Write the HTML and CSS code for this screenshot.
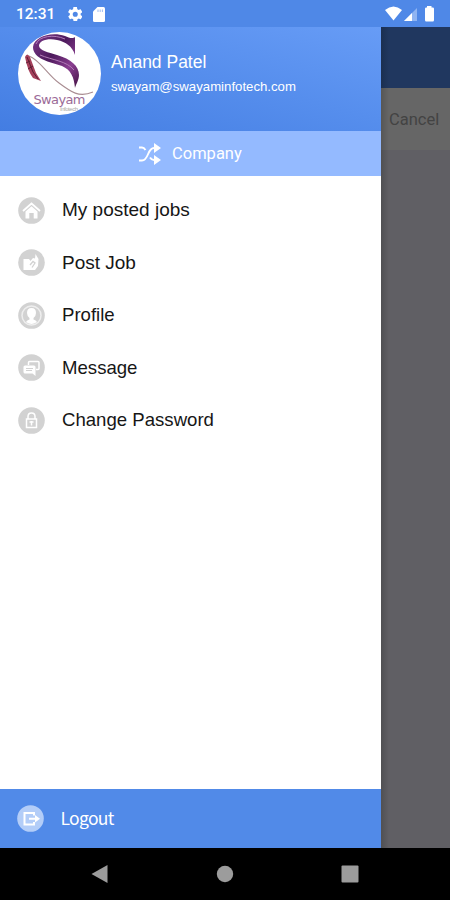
FILE: index.html
```html
<!DOCTYPE html>
<html>
<head>
<meta charset="UTF-8">
<title>Menu</title>
<link rel="stylesheet" href="styles.css">
</head>
<body>
<div class="status">
  <span class="time">12:31</span>
  <svg class="gear" width="14.500" height="14.500" viewBox="2 2 20 20"><path fill="#fff" d="M19.4 13c0-.3.1-.6.1-1s0-.7-.1-1l2.1-1.600c.2-.2.2-.4.1-.6l-2-3.500c-.1-.2-.4-.3-.6-.2l-2.500 1c-.5-.4-1.100-.7-1.700-1l-.4-2.600c0-.3-.2-.5-.5-.5h-4c-.3 0-.5.2-.5.4l-.4 2.700c-.6.2-1.100.6-1.700 1l-2.500-1c-.2-.1-.5 0-.6.2l-2 3.500c-.1.2-.1.500.1.600L4.600 11c0 .3-.1.700-.1 1s0 .7.1 1l-2.100 1.600c-.2.200-.2.400-.1.600l2 3.500c.1.200.4.300.6.200l2.500-1c.5.4 1.100.7 1.700 1l.4 2.600c0 .3.200.5.500.5h4c.3 0 .5-.2.500-.5l.4-2.600c.6-.3 1.200-.6 1.700-1l2.500 1c.2.100.5 0 .6-.2l2-3.500c.1-.2.1-.5-.1-.6zM12 15.500a3.500 3.500 0 1 1 0-7 3.500 3.500 0 0 1 0 7z"/></svg>
  <svg class="card" width="12" height="15" viewBox="0 0 12 15"><path fill="#fff" d="M4.500 0H10.500Q12 0 12 1.500V13.500Q12 15 10.500 15H1.500Q0 15 0 13.500V4.500z"/><path stroke="#9dbcf2" stroke-width="1" d="M5 2.500V5M7.200 2.500V5M9.400 2.500V5"/></svg>
  <svg class="signals" width="52" height="16" viewBox="0 0 52 16">
    <path fill="#fff" d="M0 4Q8.500-3 17 4L8.500 14.500z"/>
    <path fill="#8fb4f2" d="M19 15L32 2V15z"/>
    <path fill="#fff" d="M19 15L27 7V15z"/>
    <path fill="#fff" d="M42 1.500V0H46.500V1.500H47.800Q49 1.500 49 2.700V14Q49 15.500 47.800 15.500H41.200Q40 15.500 40 14V2.700Q40 1.500 41.200 1.500z"/>
  </svg>
</div>

<div class="main">
  <div class="drawer">
    <div class="header">
      <svg class="avatar" width="83" height="83" viewBox="0 0 83 83">
        <defs>
          <clipPath id="round"><circle cx="41.500" cy="41.500" r="41.500"/></clipPath>
          <linearGradient id="plum" x1="0" y1="0" x2="1" y2="1">
            <stop offset="0" stop-color="#7d3a8c"/><stop offset=".4" stop-color="#4d1a5c"/>
            <stop offset=".7" stop-color="#8a3f91"/><stop offset="1" stop-color="#401041"/>
          </linearGradient>
        </defs>
        <circle cx="41.500" cy="41.500" r="41.500" fill="#fff"/>
        <g clip-path="url(#round)">
          <path fill="none" stroke="#a98d92" stroke-width="1.100" d="M11 24C22 28 29 42 41 51S61 66 75 60"/>
          <path fill="#a5405b" d="M7 25Q9 20 12 25L18 41L23 49L15 46Q10 40 7 25z"/>
          <path fill="none" stroke="#5c1c33" stroke-width="1" d="M9 25L15 40L20 47M8 31L12 29M10 37L15 34"/>
          <path fill="url(#plum)" d="M57 5V23C54 14 48 10 39 8C29 6 21 9 21 14C22 19 30 20 39 23C53 27 61 34 61 43C61 48 58 52 57 56C56 45 53 38 44 34C32 30 15 27 15 15C16 5 33-1 47 4C51 6 55 7 57 5z"/>
          <path fill="none" stroke="#b17cb6" stroke-width="1" d="M18 12C21 4 36 2 47 7M22 23C34 28 49 29 56 38"/>
          <text class="logo" x="15.500" y="72" textLength="52">Swayam</text>
          <text class="logo-sub" x="42" y="79" textLength="18">Infotech</text>
        </g>
      </svg>
      <div class="user">
        <div class="name">Anand Patel</div>
        <div class="mail">swayam@swayaminfotech.com</div>
      </div>
    </div>
    <div class="company">
      <svg width="24" height="24" viewBox="0 0 24 24"><g fill="none" stroke="#fff" stroke-width="1.900"><path d="M1 5.500H4Q6 5.500 7.500 8M1 18.500H4C11 18.500 9 6 16 6H18M12 15.500Q13.500 18 16 18H18"/></g><path fill="#fff" d="M16 1L23 6L16 11zM16 13L23 18L16 23z"/></svg>
      <span>Company</span>
    </div>
    <div class="menu">
      <div class="item">
        <svg width="27" height="27" viewBox="0 0 27 27"><circle cx="13.500" cy="13.500" r="13.300"/><path fill="none" stroke="#fff" stroke-width="1.800" d="M5 14L13.500 6.500L22 14"/><path fill="#fff" d="M7.500 14.500L13.500 9.200L19.500 14.500V21.500H15.700V16H11.300V21.500H7.500z"/></svg>
        <span class="wide">My posted jobs</span>
      </div>
      <div class="item">
        <svg width="27" height="27" viewBox="0 0 27 27"><circle cx="13.500" cy="13.500" r="13.300"/><path fill="#fff" d="M5.500 10H11L12.500 12L15 9L17 9.500L17.500 5L20.500 10L20 17L17 21H5.500z"/><path fill="none" stroke="#d2d2d2" stroke-width="1.300" d="M12 16L15 12.500L17 14L14 18.500"/></svg>
        <span class="wide">Post Job</span>
      </div>
      <div class="item">
        <svg width="27" height="27" viewBox="0 0 27 27"><circle cx="13.500" cy="13.500" r="13.300"/><circle class="ring" cx="13.500" cy="13.500" r="9.500"/><path fill="#fff" d="M8 20Q9 18 11.500 17.500V16Q9 14 9 11Q9 6 13.500 6T18 11Q18 14 15.500 16V17.500Q18 18 19 20Q16 22 13.500 22T8 20z"/></svg>
        <span>Profile</span>
      </div>
      <div class="item">
        <svg width="27" height="27" viewBox="0 0 27 27"><circle cx="13.500" cy="13.500" r="13.300"/><path fill="none" stroke="#fff" stroke-width="1.500" d="M10.500 11V8.500Q10.500 7.500 11.500 7.500H20Q21 7.500 21 8.500V14.500Q21 15.500 20 15.500H18"/><path fill="#fff" d="M7 11.500H16Q17.500 11.500 17.500 13V22L14.500 19.500H7Q5.500 19.500 5.500 18V13Q5.500 11.500 7 11.500z"/><path stroke="#d2d2d2" d="M8 14.500H15M8 16.500H14"/></svg>
        <span>Message</span>
      </div>
      <div class="item">
        <svg width="27" height="27" viewBox="0 0 27 27"><circle cx="13.500" cy="13.500" r="13.300"/><path fill="none" stroke="#fff" stroke-width="1.500" d="M10 12V9.500Q10 6 13.500 6T17 9.500V12M8.500 12H18.500V20.500H8.500z"/><path stroke="#fff" stroke-width="1.500" d="M13.500 14V18.500M11.500 15H15.500"/></svg>
        <span>Change Password</span>
      </div>
    </div>
    <div class="logout">
      <svg width="27" height="27" viewBox="0 0 27 27"><circle cx="13.500" cy="13.500" r="13.300"/><path fill="none" stroke="#fff" stroke-width="2" d="M17 10.500V8H7.500V19.500H17V17"/><path fill="#fff" d="M12 12.800H18V10L23 13.800L18 17.500V14.800H12z"/></svg>
      <span>Logout</span>
    </div>
  </div>
  <div class="behind">
    <div class="toolbar"></div>
    <div class="search">Cancel</div>
  </div>
</div>

<div class="nav">
  <svg width="450" height="52" viewBox="0 0 450 52" fill="#9c9c9c"><path d="M107.500 17V35L91.500 26z"/><circle cx="225" cy="26" r="8.200"/><rect x="341.500" y="17.500" width="17" height="17" rx="1"/></svg>
</div>
</body>
</html>
```
FILE: styles.css
```css
body {
  margin: 0;
  width: 450px;
  height: 900px;
  overflow: hidden;
  display: flex;
  flex-direction: column;
  background: #000;
  font-family: "Liberation Sans", Arial, sans-serif;
}
svg {
  display: block;
  flex: none;
}
.status {
  height: 27px;
  display: flex;
  align-items: center;
  box-sizing: border-box;
  padding: 1px 13px 0 16px;
  background: #4f88e7;
  color: #fff;
}
.time {
  width: 51.500px;
  font: 500 15.500px Roboto, sans-serif;
}
.card {
  margin-left: 11px;
}
.signals {
  margin-left: auto;
}
.main {
  height: 821px;
  display: flex;
}
.drawer {
  width: 380.500px;
  display: flex;
  flex-direction: column;
  background: #fff;
}
.header {
  height: 104px;
  box-sizing: border-box;
  padding: 5px 0 0 17.500px;
  display: flex;
  background: linear-gradient(to bottom left, #679cf6 0%, #568eed 45%, #437de2 100%);
  color: #fff;
}
.user {
  padding: 20px 0 0 10.500px;
}
.name {
  font-size: 17.500px;
  line-height: 21px;
}
.mail {
  margin-top: 6px;
  font-size: 13.200px;
  line-height: 16px;
}
.logo {
  font: 13px "DejaVu Sans", sans-serif;
  fill: #9b6b98;
}
.logo-sub {
  font: 6px "Liberation Sans", sans-serif;
  fill: #aaa;
}
.company {
  height: 44.500px;
  display: flex;
  align-items: center;
  box-sizing: border-box;
  padding: 1px 0 0 138px;
  gap: 10px;
  background: #94baff;
  color: #fff;
  font: 16.500px Roboto, sans-serif;
}
.menu {
  flex: 1;
  padding-top: 8.500px;
}
.item {
  height: 52.500px;
  display: flex;
  align-items: center;
  padding-left: 17.500px;
  gap: 17.500px;
  color: #161616;
  font-size: 18.600px;
}
.wide {
  font-size: 19px;
}
.item circle {
  fill: #d2d2d2;
}
.item .ring {
  fill: none;
  stroke: #eee;
  stroke-width: 1.5;
}
.logout {
  height: 59.500px;
  display: flex;
  align-items: center;
  padding-left: 16.500px;
  gap: 17px;
  background: #518ae8;
  color: #fff;
  font: 17.500px "Noto Sans CJK SC", sans-serif;
}
.logout span {
  margin-top: -2px;
  letter-spacing: -0.7px;
}
.logout circle {
  fill: #b3cdf8;
}
.behind {
  flex: 1;
  background: linear-gradient(to right, #505053, #605f64 8px);
}
.toolbar {
  height: 61px;
  background: linear-gradient(to right, #1b2f50, #20375f 8px);
}
.search {
  height: 62px;
  line-height: 63px;
  padding-left: 8.500px;
  background: linear-gradient(to right, #565656, #666 8px);
  color: #434343;
  font-family: Roboto, sans-serif;
  font-size: 16.500px;
}
.nav {
  height: 52px;
}
```
